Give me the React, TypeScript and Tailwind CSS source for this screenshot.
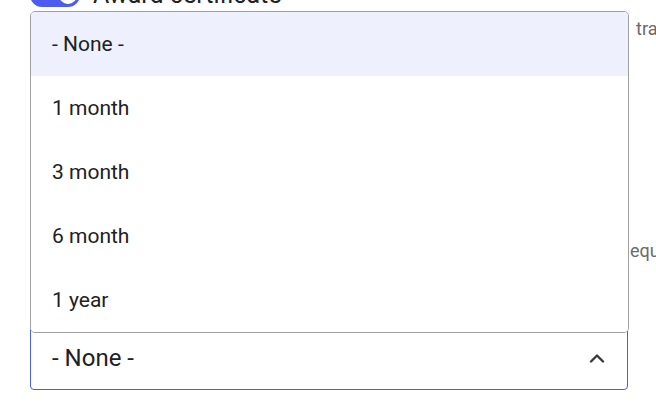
import React from "react";

const options = ["- None -", "1 month", "3 month", "6 month", "1 year"];

export default function App() {
  return (
    <div className="relative h-[410px] w-[656px] overflow-hidden bg-white font-['Roboto',sans-serif] text-[#212121]">
      <div className="flex flex-col">
        <div className="mt-[-21px] flex h-[32px] items-center gap-[13px] pl-[30px]">
          <div className="relative h-[24px] w-[50px] rounded-full bg-[#4f5cf0]">
            <div className="absolute right-[1px] top-[1px] h-[22px] w-[22px] rounded-full border-2 border-[#4f5cf0] bg-white" />
          </div>
          <span className="whitespace-nowrap text-[25px] leading-[32px]">Award certificate</span>
        </div>
        <p className="mt-[6px] whitespace-nowrap pl-[636px] text-[18px] leading-[24px] text-[#6b6b6b]">training</p>
        <p className="mt-[198px] whitespace-nowrap pl-[630px] text-[18px] leading-[24px] text-[#6b6b6b]">equired</p>
        <div className="ml-[30px] mt-[63px] flex h-[64px] w-[598px] items-center justify-between rounded-[4px] border border-[#4a5cf2] pl-[21px] pr-[22px]">
          <span className="text-[24px] leading-[30px]">- None -</span>
          <svg width="16" height="10" viewBox="0 0 16 10" fill="none">
            <path d="M2 8.5 L8 2.5 L14 8.5" stroke="#3a3a3a" strokeWidth="2.4" strokeLinecap="round" strokeLinejoin="round" />
          </svg>
        </div>
      </div>

      <div className="absolute left-[30px] top-[11px] flex w-[599px] flex-col overflow-hidden rounded-[5px] border border-[#a0a0a0] bg-white">
        {options.map((o, i) => (
          <div
            key={o}
            className={`flex h-[64px] items-center pl-[21px] text-[21px] leading-[28px] ${i === 0 ? "bg-[#eef0fd]" : "bg-white"}`}
          >
            {o}
          </div>
        ))}
      </div>
    </div>
  );
}
